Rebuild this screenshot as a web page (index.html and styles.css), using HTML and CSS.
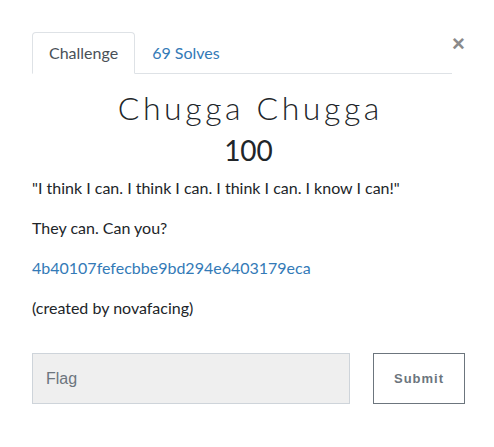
FILE: index.html
```html
<!DOCTYPE html>
<html>
<head>
<meta charset="utf-8">
<link rel="stylesheet" href="styles.css">
</head>
<body>
<div class="modal">
  <div class="top">
    <ul class="tabs">
      <li class="tab active">Challenge</li>
      <li class="tab link">69 Solves</li>
    </ul>
    <span class="close">&times;</span>
  </div>
  <h2 class="title">Chugga Chugga</h2>
  <h3 class="value">100</h3>
  <div class="desc">
    <p>"I think I can. I think I can. I think I can. I know I can!"</p>
    <p>They can. Can you?</p>
    <p><a href="#">4b40107fefecbbe9bd294e6403179eca</a></p>
    <p>(created by novafacing)</p>
  </div>
  <div class="submit-row">
    <input class="flag" type="text" placeholder="Flag">
    <button class="submit">Submit</button>
  </div>
</div>
</body>
</html>
```

FILE: styles.css
```css
html, body {
  margin: 0;
  padding: 0;
  background: #fff;
}
body {
  font-family: Lato, "Liberation Sans", sans-serif;
  color: #212529;
}
.modal {
  width: 433px;
  padding: 32px 29px 0 32px;
}
.top {
  display: flex;
  align-items: flex-start;
}
.tabs {
  list-style: none;
  margin: 0;
  padding: 0;
  display: flex;
  width: 420px;
  border-bottom: 1px solid #dee2e6;
}
.tab {
  font-size: 16px;
  line-height: 22px;
  padding: 9px 16px 9px 16px;
  border: 1px solid transparent;
  margin-bottom: -1px;
  border-radius: 4px 4px 0 0;
}
.tab.active {
  color: #495057;
  border-color: #dee2e6 #dee2e6 #fff;
  background: #fff;
}
.tab.link {
  color: #337ab7;
}
.close {
  font-family: "Liberation Sans", sans-serif;
  font-size: 22px;
  font-weight: bold;
  color: #8a8a8a;
  line-height: 22px;
  margin-top: 1px;
  width: 13px;
}
.title {
  font-family: Lato, sans-serif;
  font-weight: 300;
  font-size: 32px;
  letter-spacing: 3.6px;
  text-indent: 3.6px;
  text-align: center;
  margin: 14px 0 0 0;
  line-height: 40px;
}
.value {
  font-weight: 400;
  font-size: 28px;
  text-align: center;
  margin: 4px 0 0 0;
  line-height: 36px;
}
.desc {
  margin-top: 8px;
}
.desc p {
  margin: 0 0 16px 0;
  font-size: 16px;
  line-height: 24px;
}
.desc a {
  color: #337ab7;
  text-decoration: none;
}
.submit-row {
  display: flex;
  gap: 23px;
  margin-top: 33px;
}
.flag {
  width: 318px;
  height: 51px;
  box-sizing: border-box;
  border: 1px solid #ced4da;
  background: #efefef;
  font-family: "Liberation Sans", sans-serif;
  font-size: 16px;
  padding: 0 13px;
  outline: none;
}
.flag::placeholder {
  color: #6c757d;
}
.submit {
  width: 92px;
  height: 51px;
  box-sizing: border-box;
  background: #fff;
  border: 1px solid #6c757d;
  color: #6c757d;
  font-family: "Liberation Sans", sans-serif;
  font-weight: bold;
  font-size: 13px;
  letter-spacing: 1px;
}
```
